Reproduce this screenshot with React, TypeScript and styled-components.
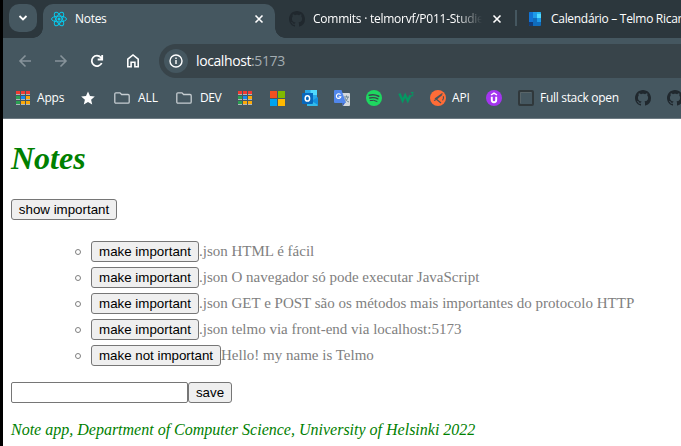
import React from "react";
import styled, { createGlobalStyle } from "styled-components";

const GlobalStyle = createGlobalStyle`
  *, *::before, *::after { box-sizing: border-box; }
  body { margin: 0; background: #fff; overflow: hidden; }
`;

const Window = styled.div`
  width: 681px;
  height: 446px;
  overflow: hidden;
  border-left: 3px solid #000;
  background: #fff;
`;

const Chrome = styled.header`
  height: 119px;
  background: #455760;
  border-bottom: 1px solid #6d7a82;
  font-family: "Open Sans", "Noto Sans", sans-serif;
  font-size: 12px;
  color: #fff;
`;

const TabStrip = styled.div`
  display: flex;
  height: 38px;
  background: #2c373d;
`;

const TabSearch = styled.button`
  display: flex;
  flex: none;
  align-items: center;
  justify-content: center;
  width: 28px;
  height: 28px;
  margin: 4px 6px 0;
  padding: 0;
  border: 0;
  border-radius: 10px;
  background: #455760;
  color: #fff;
`;

const Tab = styled.div<{ $active?: boolean; $width: number }>`
  position: relative;
  display: flex;
  align-items: center;
  flex: none;
  width: ${(p) => p.$width}px;
  height: 34px;
  margin-top: 4px;
  padding-bottom: 5px;
  border-radius: 10px 10px 0 0;
  background: ${(p) => (p.$active ? "#455760" : "transparent")};
  &::before,
  &::after {
    content: "";
    display: ${(p) => (p.$active ? "block" : "none")};
    position: absolute;
    bottom: 0;
    width: 10px;
    height: 10px;
  }
  &::before { left: -10px; background: radial-gradient(circle at 0 0, transparent 9.5px, #455760 10px); }
  &::after { right: -10px; background: radial-gradient(circle at 100% 0, transparent 9.5px, #455760 10px); }
`;

const TabIcon = styled.span<{ $left: number; $width?: number }>`
  display: flex;
  flex: none;
  width: ${(p) => p.$width ?? 16}px;
  margin-left: ${(p) => p.$left}px;
  margin-right: 8px;
`;

const Label = styled.span<{ $spacing?: number; $width?: number; $fade?: boolean }>`
  flex: none;
  width: ${(p) => (p.$width ? `${p.$width}px` : "auto")};
  white-space: nowrap;
  line-height: 18px;
  letter-spacing: ${(p) => p.$spacing ?? 0}px;
  mask-image: ${(p) => (p.$fade ? "linear-gradient(to right, #000 calc(100% - 26px), transparent)" : "none")};
`;

const CloseButton = styled.span<{ $right: number }>`
  display: flex;
  margin-left: auto;
  margin-right: ${(p) => p.$right}px;
`;

const Separator = styled.span`
  flex: none;
  width: 2px;
  height: 16px;
  margin-top: 6px;
  align-self: flex-start;
  margin-top: 10px;
  background: #455760;
`;

const Toolbar = styled.div`
  display: flex;
  align-items: center;
  height: 46px;
  padding-left: 14px;
`;

const NavButton = styled.span<{ $dim?: boolean }>`
  display: flex;
  width: 36px;
  color: ${(p) => (p.$dim ? "#87939a" : "#fff")};
`;

const AddressBar = styled.div`
  display: flex;
  align-items: center;
  flex: 1;
  height: 34px;
  margin-left: -2px;
  padding-left: 5px;
  border-radius: 17px 0 0 17px;
  background: #38444a;
  font-size: 14px;
`;

const SiteInfo = styled.span`
  display: flex;
  align-items: center;
  justify-content: center;
  width: 24px;
  height: 24px;
  margin-right: 8px;
  border-radius: 50%;
  background: #455760;
`;

const Port = styled.span`
  color: #a3acb1;
`;

const Bookmarks = styled.nav`
  display: flex;
  align-items: center;
  height: 34px;
  padding: 0 0 6px 13px;
`;

const Bookmark = styled.span<{ $width: number; $gap?: number }>`
  display: flex;
  align-items: center;
  flex: none;
  gap: ${(p) => p.$gap ?? 6}px;
  width: ${(p) => p.$width}px;
  svg { flex: none; }
`;

const Page = styled.main`
  padding: 0 8px;
  font-family: "Liberation Serif", "Times New Roman", serif;
  font-size: 16px;
`;

const Title = styled.h1`
  margin: 0;
  padding-top: 21px;
  height: 80px;
  font-size: 32px;
  line-height: 37px;
  font-style: italic;
  color: green;
`;

const Button = styled.button<{ $width: number }>`
  flex: none;
  width: ${(p) => p.$width}px;
  height: 21px;
  padding: 0;
  border: 1px solid #767676;
  border-radius: 3px;
  background: #efefef;
  color: #000;
  font: 13.333px/19px "Liberation Sans", Arial, sans-serif;
  white-space: nowrap;
`;

const NoteList = styled.ul`
  list-style: none;
  margin: 16px 0 0;
  padding: 0 0 0 64px;
`;

const Note = styled.li`
  display: flex;
  height: 26px;
  padding-top: 5px;
  font-size: 15px;
  line-height: 21px;
  color: gray;
  white-space: pre;
  &::before {
    content: "";
    flex: none;
    width: 6px;
    height: 6px;
    margin: 8px 10px 0 0;
    border: 1px solid gray;
    border-radius: 50%;
  }
`;

const Form = styled.form`
  display: flex;
  margin-top: 16px;
`;

const Input = styled.input`
  width: 177px;
  height: 21px;
  padding: 1px 2px;
  border: 1px solid #767676;
  border-radius: 2px;
  background: #fff;
`;

const Footer = styled.footer`
  margin-top: 17px;
  font-size: 16px;
  line-height: 20px;
  font-style: italic;
  color: green;
  white-space: nowrap;
`;

const ReactLogo = () => (
  <svg width="16" height="16" viewBox="0 0 16 16" fill="none" stroke="#08c8eb" strokeWidth="1">
    {[90, 30, 150].map((angle) => (
      <ellipse key={angle} cx="8" cy="8" rx="2.9" ry="7.5" transform={`rotate(${angle} 8 8)`} />
    ))}
    <circle cx="8" cy="8" r="1.5" fill="#08c8eb" stroke="none" />
  </svg>
);

const GitHubLogo = () => (
  <svg width="16" height="16" viewBox="0 0 16 16" fill="#20282e">
    <path d="M8 0C3.58 0 0 3.58 0 8c0 3.54 2.29 6.53 5.47 7.59.4.07.55-.17.55-.38 0-.19-.01-.82-.01-1.49-2.01.37-2.53-.49-2.69-.94-.09-.23-.48-.94-.82-1.13-.28-.15-.68-.52-.01-.53.63-.01 1.08.58 1.23.82.72 1.21 1.87.87 2.33.66.07-.52.28-.87.51-1.07-1.78-.2-3.64-.89-3.64-3.95 0-.87.31-1.59.82-2.15-.08-.2-.36-1.02.08-2.12 0 0 .67-.21 2.2.82.64-.18 1.32-.27 2-.27s1.36.09 2 .27c1.53-1.04 2.2-.82 2.2-.82.44 1.1.16 1.92.08 2.12.51.56.82 1.27.82 2.15 0 3.07-1.87 3.75-3.65 3.95.29.25.54.73.54 1.48 0 1.07-.01 1.93-.01 2.2 0 .21.15.46.55.38A8.01 8.01 0 0 0 16 8c0-4.42-3.58-8-8-8Z" />
  </svg>
);

const CalendarLogo = () => (
  <svg width="12" height="14" viewBox="0 0 12 14">
    <clipPath id="cal"><rect width="12" height="14" rx="1" /></clipPath>
    <g clipPath="url(#cal)">
      <path fill="#0f6cbd" d="M0 0h12v14H0z" />
      <path fill="#1173d4" d="M0 0h4v10H0z" />
      <path fill="#1e9ae8" d="M4 0h4v6H4zM8 6h4v4H8z" />
      <path fill="#28b4ee" d="M8 0h4v2H8z" />
      <path fill="#50d9ff" d="M8 2h4v4H8z" />
      <path fill="#123b79" d="M0 10h4v4H0z" />
    </g>
  </svg>
);

const Close = () => (
  <svg width="10" height="10" viewBox="0 0 10 10" stroke="#fff" strokeWidth="1.6"><path d="m1.5 1.5 7 7m0-7-7 7" /></svg>
);

const AppsGrid = () => {
  const colors = ["#f13b32", "#f13b32", "#f13b32", "#2aa052", "#1688f0", "#fba90a", "#2aa052", "#fba90a", "#fba90a"];
  return (
    <svg width="14" height="14" viewBox="0 0 14 14" shapeRendering="crispEdges">
      {colors.map((fill, i) => {
        const x = (i % 3) * 5;
        const y = Math.floor(i / 3) * 5;
        return (
          <g key={i}>
            <path fill={fill} d={`M${x} ${y}h4v3h-4z`} />
            <path fill="#aeb6ba" d={`M${x} ${y + 3}h4v1h-4z`} />
          </g>
        );
      })}
    </svg>
  );
};

const Folder = () => (
  <svg width="16" height="12" viewBox="0 0 16 12" fill="none" stroke="#c6cdd1" strokeWidth="1.3">
    <path d="M.8 2.2Q.8.8 2 .8h4l1.6 1.7H14q1.2 0 1.2 1.2v6.2q0 1.3-1.2 1.3H2Q.8 11.2.8 9.9Z" />
  </svg>
);

const Star = () => (
  <svg width="14" height="14" viewBox="0 0 14 14" fill="#fff"><path d="m7 .5 2 4.5 4.8.5-3.7 3.2 1.1 4.8L7 11l-4.2 2.5 1.1-4.8L.2 5.5 5 5Z" /></svg>
);

const Microsoft = () => (
  <svg width="15" height="15" viewBox="0 0 15 15">
    <path fill="#f25022" d="M0 0h7v7H0z" /><path fill="#7fba00" d="M8 0h7v7H8z" />
    <path fill="#00a4ef" d="M0 8h7v7H0z" /><path fill="#ffb900" d="M8 8h7v7H8z" />
  </svg>
);

const Outlook = () => (
  <svg width="16" height="16" viewBox="0 0 16 16">
    <path fill="#28a8ea" d="M3 0h12v11H3z" /><path fill="#50d9ff" d="M8.5 0H15v5H8.5z" />
    <path fill="#0869bd" d="M4 3h7v8H4z" /><path fill="#1490df" d="m16 7-10 6v3h9q1 0 1-1Z" />
    <path fill="#32bbea" d="m5 8 11 7-1 1H5Z" />
    <rect y="3" width="11" height="11" rx="1" fill="#0868bd" />
    <ellipse cx="5.4" cy="8.4" rx="2.2" ry="2.6" fill="none" stroke="#fff" strokeWidth="1.5" />
  </svg>
);

const Translate = () => (
  <svg width="16" height="16" viewBox="0 0 16 16">
    <path fill="#d5d9dc" d="M6 3h9q1 0 1 1v11q0 1-1 1H9Z" />
    <path fill="#3d65c0" d="m8 13 3 0-2 3Z" />
    <path stroke="#6d8795" d="M10 7h5m-2.5-1.5V7m1.5 0c-.5 2.5-2 4-3.5 4.5M11 8c.5 2 2 3.5 4 4" fill="none" />
    <path fill="#5187ec" d="M1 0h6.5L12 13H1q-1 0-1-1V1q0-1 1-1Z" />
    <path fill="none" stroke="#fff" strokeWidth="1.1" d="M6.5 4.7a2.3 2.3 0 1 0 .4 2H4.7" />
  </svg>
);

const Spotify = () => (
  <svg width="16" height="16" viewBox="0 0 16 16" fill="none" stroke="#37474d" strokeLinecap="round">
    <circle cx="8" cy="8" r="8" fill="#1ed760" stroke="none" />
    <path strokeWidth="1.6" d="M3.2 5.3q5-1.4 9.5 1" /><path strokeWidth="1.3" d="M3.7 8q4.5-1.2 8.2.9" /><path strokeWidth="1" d="M4.2 10.5q3.5-.9 6.8.9" />
  </svg>
);

const W3Logo = () => (
  <svg width="16" height="16" viewBox="0 0 16 16" fill="none" stroke="#059862">
    <path strokeWidth="2.4" d="m1.4 3.5 3.2 7.2 2.6-5.5 2.6 5.5 2.6-5.5" />
    <path strokeWidth="1" d="M13 2.5h2.3L14 3.8q1.800.4 1 1.700-.9.9-2 .2" />
  </svg>
);

const Postman = () => (
  <svg width="16" height="16" viewBox="0 0 16 16" fill="none">
    <circle cx="8" cy="8" r="8" fill="#ff6c37" />
    <path stroke="#4b5358" strokeWidth="1.2" d="m12.5 3.5-7 5 5.5 4.5M6.5 9l5.5-4.5M4 10.5l2-.7M13.3 6.300q.9 2-.8 4" />
  </svg>
);

const Udemy = () => (
  <svg width="16" height="16" viewBox="0 0 16 16" fill="none" stroke="#fff">
    <circle cx="8" cy="8" r="8" fill="#a435f0" stroke="none" />
    <path strokeWidth="1.4" d="m5 5 3-1.9L11 5" />
    <path strokeWidth="1.9" d="M5.8 6.7v3.4q0 2.2 2.2 2.2t2.2-2.200V6.7" />
  </svg>
);

const StackOutline = () => (
  <svg width="16" height="16" viewBox="0 0 16 16" fill="none">
    <rect x="1" y="1" width="14" height="14" rx="1" stroke="#30383b" strokeWidth="2" />
    <path stroke="#596569" d="M2.5 13V2.5H13" />
  </svg>
);

const notes = [
  { content: ".json HTML é fácil", important: false },
  { content: ".json O navegador só pode executar JavaScript", important: false },
  { content: ".json GET e POST são os métodos mais importantes do protocolo HTTP", important: false },
  { content: ".json telmo via front-end via localhost:5173", important: false },
  { content: "Hello! my name is Telmo", important: true },
];

export default function App() {
  return (
    <Window>
      <GlobalStyle />
      <Chrome>
        <TabStrip>
          <TabSearch aria-label="Search tabs">
            <svg width="10" height="10" viewBox="0 0 10 10" fill="none" stroke="#fff" strokeWidth="1.8"><path d="m1.5 3 3.5 3.5L8.5 3" /></svg>
          </TabSearch>
          <Tab $active $width={232}>
            <TabIcon $left={8}><ReactLogo /></TabIcon>
            <Label $spacing={-0.3}>Notes</Label>
            <CloseButton $right={11}><Close /></CloseButton>
          </Tab>
          <Tab $width={240}>
            <TabIcon $left={14}><GitHubLogo /></TabIcon>
            <Label $width={169} $spacing={-0.25} $fade>Commits · telmorvf/P011-Studie</Label>
            <CloseButton $right={13}><Close /></CloseButton>
          </Tab>
          <Separator />
          <Tab $width={164}>
            <TabIcon $left={12} $width={14}><CalendarLogo /></TabIcon>
            <Label $spacing={-0.3}>Calendário – Telmo Ricar</Label>
          </Tab>
        </TabStrip>
        <Toolbar>
          <NavButton $dim>
            <svg width="16" height="16" viewBox="0 0 16 16" fill="none" stroke="currentColor" strokeWidth="1.6"><path d="M14 8H3m5.5-5.5L3 8l5.5 5.5" /></svg>
          </NavButton>
          <NavButton $dim>
            <svg width="16" height="16" viewBox="0 0 16 16" fill="none" stroke="currentColor" strokeWidth="1.6"><path d="M2 8h11M7.5 2.5 13 8l-5.5 5.5" /></svg>
          </NavButton>
          <NavButton>
            <svg width="16" height="16" viewBox="0 0 16 16" fill="none" stroke="currentColor" strokeWidth="1.8"><path d="M12.7 10a5.2 5.2 0 1 1-.8-5.5L13 6M13.2 2v4.5H8.7" /></svg>
          </NavButton>
          <NavButton>
            <svg width="16" height="16" viewBox="0 0 16 16" fill="none" stroke="currentColor" strokeWidth="1.6"><path d="M2.8 6.2 8 2l5.2 4.2v7.6H9.9V9.2H6.1v4.6H2.8Z" /></svg>
          </NavButton>
          <AddressBar>
            <SiteInfo>
              <svg width="14" height="14" viewBox="0 0 14 14" fill="none" stroke="#fff" strokeWidth="1.4"><circle cx="7" cy="7" r="6" /><path d="M7 6v4M7 3.6v1.5" /></svg>
            </SiteInfo>
            <Label $spacing={-0.4}>localhost<Port>:5173</Port></Label>
          </AddressBar>
        </Toolbar>
        <Bookmarks>
          <Bookmark $width={65} $gap={7}><AppsGrid /><Label $spacing={-0.2}>Apps</Label></Bookmark>
          <Bookmark $width={33}><Star /></Bookmark>
          <Bookmark $width={62} $gap={8}><Folder /><Label $spacing={-0.1}>ALL</Label></Bookmark>
          <Bookmark $width={62} $gap={8}><Folder /><Label $spacing={-0.4}>DEV</Label></Bookmark>
          <Bookmark $width={32}><AppsGrid /></Bookmark>
          <Bookmark $width={32}><Microsoft /></Bookmark>
          <Bookmark $width={32}><Outlook /></Bookmark>
          <Bookmark $width={32}><Translate /></Bookmark>
          <Bookmark $width={32}><Spotify /></Bookmark>
          <Bookmark $width={32}><W3Logo /></Bookmark>
          <Bookmark $width={56}><Postman /><Label $spacing={-0.2}>API</Label></Bookmark>
          <Bookmark $width={32}><Udemy /></Bookmark>
          <Bookmark $width={117}><StackOutline /><Label $spacing={-0.3}>Full stack open</Label></Bookmark>
          <Bookmark $width={32}><GitHubLogo /></Bookmark>
          <Bookmark $width={32}><GitHubLogo /></Bookmark>
        </Bookmarks>
      </Chrome>
      <Page>
        <Title>Notes</Title>
        <Button $width={106}>show important</Button>
        <NoteList>
          {notes.map((note) => (
            <Note key={note.content}>
              <Button $width={note.important ? 130 : 108}>{note.important ? "make not important" : "make important"}</Button>
              {note.content}
            </Note>
          ))}
        </NoteList>
        <Form>
          <Input aria-label="New note" />
          <Button type="button" $width={44}>save</Button>
        </Form>
        <Footer>Note app, Department of Computer Science, University of Helsinki 2022</Footer>
      </Page>
    </Window>
  );
}
